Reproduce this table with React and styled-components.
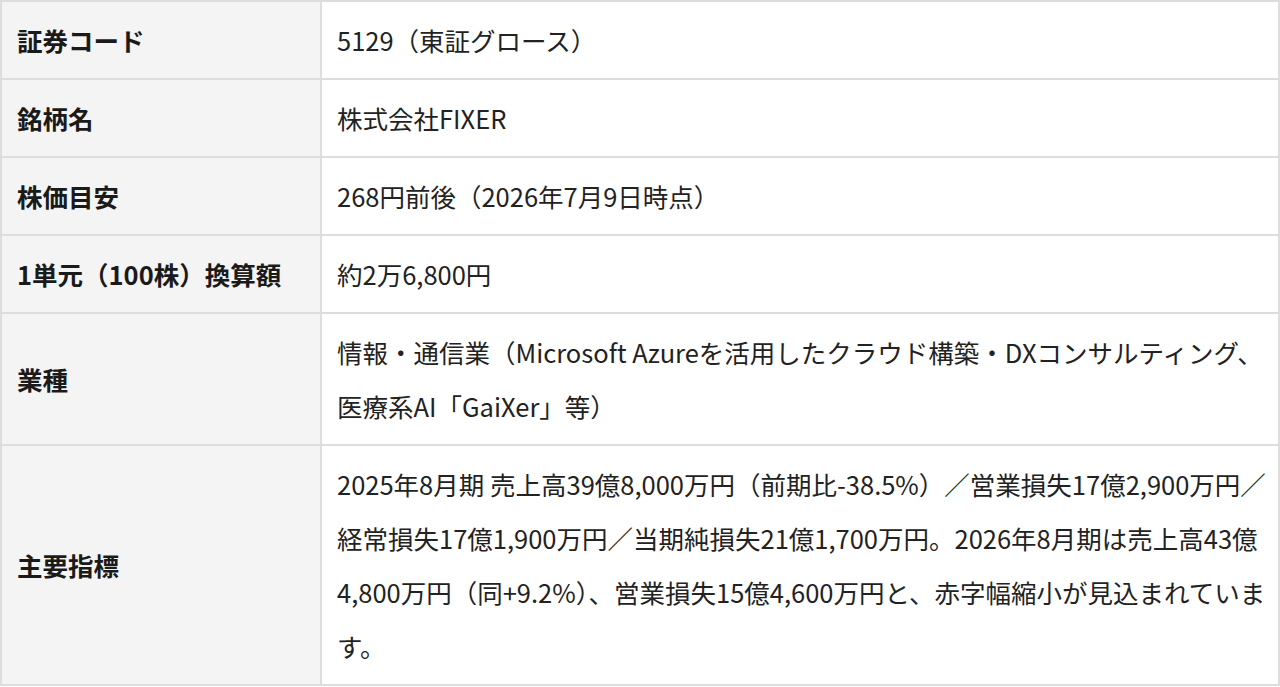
import styled, { createGlobalStyle } from 'styled-components'

const GlobalStyle = createGlobalStyle`
  body {
    margin: 0;
    background: #fff;
    font-family: "Noto Sans CJK JP", "Noto Sans", sans-serif;
    color: #222;
  }
`

const Table = styled.table`
  width: 100%;
  border-collapse: collapse;
  border: 2px solid #ddd;
  font-size: 25.5px;
  line-height: 54px;
`

const Row = styled.tr`
  border-bottom: 2px solid #ddd;
`

const Head = styled.th`
  width: 288px;
  padding: 11px 15px;
  background: #f4f4f4;
  border-right: 2px solid #ddd;
  text-align: left;
  font-weight: 700;
  color: #1a1a1a;
  vertical-align: middle;
`

const Cell = styled.td`
  padding: 11px 8px 11px 15px;
  font-weight: 400;
  vertical-align: middle;
`

const rows = [
  ['証券コード', '5129（東証グロース）'],
  ['銘柄名', '株式会社FIXER'],
  ['株価目安', '268円前後（2026年7月9日時点）'],
  ['1単元（100株）換算額', '約2万6,800円'],
  ['業種', '情報・通信業（Microsoft Azureを活用したクラウド構築・DXコンサルティング、医療系AI「GaiXer」等）'],
  ['主要指標', '2025年8月期 売上高39億8,000万円（前期比-38.5%）／営業損失17億2,900万円／経常損失17億1,900万円／当期純損失21億1,700万円。2026年8月期は売上高43億4,800万円（同+9.2%）、営業損失15億4,600万円と、赤字幅縮小が見込まれています。'],
]

export default function App() {
  return (
    <>
      <GlobalStyle />
      <Table>
        <tbody>
          {rows.map(([label, value]) => (
            <Row key={label}>
              <Head>{label}</Head>
              <Cell>{value}</Cell>
            </Row>
          ))}
        </tbody>
      </Table>
    </>
  )
}
